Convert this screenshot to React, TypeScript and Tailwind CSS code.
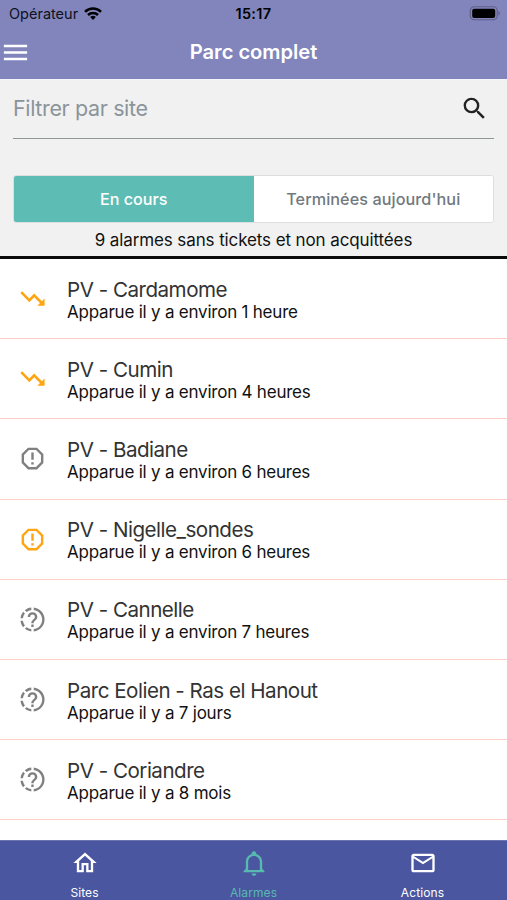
import React from "react";

const ICONS = {
  menu: "M3 6h18v2H3V6m0 5h18v2H3v-2m0 5h18v2H3v-2Z",
  search:
    "M9.5 3A6.5 6.5 0 0 1 16 9.5c0 1.61-.59 3.09-1.56 4.23l.27.27h.79l5 5-1.5 1.5-5-5v-.79l-.27-.27A6.52 6.52 0 0 1 9.5 16a6.5 6.5 0 0 1 0-13m0 2C7 5 5 7 5 9.5S7 14 9.5 14 14 12 14 9.5 12 5 9.5 5Z",
  trend:
    "M16 18l2.2-2.2-4.8-4.8-4 4L1.9 7.5 3.5 5.9l5.9 6 4-4 6.4 6.3L22 12v6h-6Z",
  alert:
    "M8.27 3 3 8.27v7.46L8.27 21h7.46L21 15.73V8.27L15.73 3M9.1 5h5.8L19 9.1v5.8L14.9 19H9.1L5 14.9V9.1M11 15h2v2h-2v-2m0-8h2v6h-2V7",
  home: "M12 5.69l5 4.5V18h-2v-6H9v6H7v-7.81l5-4.5M12 3 2 12h3v8h6v-6h2v6h6v-8h3L12 3Z",
  bell: "M10 21h4c0 1.1-.9 2-2 2s-2-.9-2-2m11-2v1H3v-1l2-2v-6c0-3.1 2.03-5.83 5-6.71V4c0-1.1.9-2 2-2s2 .9 2 2v.29c2.97.88 5 3.61 5 6.71v6l2 2m-4-8c0-2.76-2.24-5-5-5s-5 2.24-5 5v7h10v-7Z",
  mail: "M22 6c0-1.1-.9-2-2-2H4c-1.1 0-2 .9-2 2v12c0 1.1.9 2 2 2h16c1.1 0 2-.9 2-2V6m-2 0-8 5-8-5h16m0 12H4V8l8 5 8-5v10Z",
};

function Icon({ d, className }: { d: string; className: string }) {
  return (
    <svg viewBox="0 0 24 24" fill="currentColor" className={className}>
      <path d={d} />
    </svg>
  );
}

function ProgressQuestion({ className }: { className: string }) {
  return (
    <svg viewBox="0 0 24 24" fill="currentColor" className={className}>
      <path d="M13 2.03v2.02c4.39.54 7.5 4.53 6.96 8.92-.46 3.64-3.32 6.53-6.96 6.96v2c5.5-.55 9.5-5.43 8.95-10.93C21.5 6.25 17.73 2.5 13 2.03M11 2.06C9.05 2.25 7.19 3 5.67 4.26L7.1 5.74A7.9 7.9 0 0 1 11 4.06v-2M4.26 5.67A9.9 9.9 0 0 0 2.05 11h2c.19-1.42.75-2.77 1.64-3.9L4.26 5.67M2.06 13c.2 1.96.97 3.81 2.21 5.33l1.42-1.43A8 8 0 0 1 4.06 13h-2m5.04 5.37-1.43 1.37A10 10 0 0 0 11 22v-2a8 8 0 0 1-3.9-1.63Z" />
      <path d="M15.07 12.05l-.9.92C13.45 13.6 13 14 13 15.2h-2v-.3c0-1.11.45-1.81 1.17-2.53l1.24-1.16c.37-.36.59-.86.59-1.31a2 2 0 0 0-4 0H8a4 4 0 0 1 8 0c0 .88-.36 1.5-.93 2.15M13 18.2h-2v-2h2v2Z" />
    </svg>
  );
}

type Kind = "trend" | "alertGray" | "alertOrange" | "question";

const ALARMS: { kind: Kind; name: string; since: string }[] = [
  { kind: "trend", name: "PV - Cardamome", since: "Apparue il y a environ 1 heure" },
  { kind: "trend", name: "PV - Cumin", since: "Apparue il y a environ 4 heures" },
  { kind: "alertGray", name: "PV - Badiane", since: "Apparue il y a environ 6 heures" },
  { kind: "alertOrange", name: "PV - Nigelle_sondes", since: "Apparue il y a environ 6 heures" },
  { kind: "question", name: "PV - Cannelle", since: "Apparue il y a environ 7 heures" },
  { kind: "question", name: "Parc Eolien - Ras el Hanout", since: "Apparue il y a 7 jours" },
  { kind: "question", name: "PV - Coriandre", since: "Apparue il y a 8 mois" },
];

function AlarmIcon({ kind }: { kind: Kind }) {
  if (kind === "trend") return <Icon d={ICONS.trend} className="size-[29px] text-[#fea514]" />;
  if (kind === "alertGray") return <Icon d={ICONS.alert} className="size-[29px] text-[#808080]" />;
  if (kind === "alertOrange") return <Icon d={ICONS.alert} className="size-[29px] text-[#fea514]" />;
  return <ProgressQuestion className="size-[29px] text-[#808080]" />;
}

export default function App() {
  return (
    <div className="flex h-[900px] w-[507px] flex-col overflow-hidden bg-white font-['Inter','Liberation_Sans',sans-serif] whitespace-nowrap">
      <header className="h-[79px] shrink-0 bg-[#8185bc]">
        <div className="grid h-7 grid-cols-3 items-center pr-[7px] pl-[9px] text-[#10111c]">
          <div className="flex items-center gap-[6px]">
            <span className="text-[14.5px]">Opérateur</span>
            <svg viewBox="0 0 18 13" className="-mt-0.5 h-[13px] w-[18px] text-black" fill="none" stroke="currentColor" strokeWidth="2.5">
              <path d="M1 4.8a11.4 11.4 0 0 1 16 0" />
              <path d="M4 8a7.2 7.2 0 0 1 10 0" />
              <path d="M9 13 6.2 10.1a4 4 0 0 1 5.6 0Z" fill="currentColor" stroke="none" />
            </svg>
          </div>
          <span className="-ml-[2px] text-center text-[14.5px] font-semibold tracking-[0.35px] text-black">15:17</span>
          <svg viewBox="0 0 31 15" className="-mt-0.5 h-[15px] w-[31px] justify-self-end">
            <rect x="1.25" y=".75" width="27" height="13" rx="4" fill="none" stroke="#625f86" strokeWidth="1.2" />
            <rect x="3.2" y="2.7" width="23" height="9.3" rx="2" fill="#000" />
            <path d="M29.5 5v4.5c1.8-.7 1.8-3.8 0-4.5Z" fill="#625f86" />
          </svg>
        </div>
        <div className="grid h-[49px] grid-cols-[40px_1fr_40px] items-center">
          <Icon d={ICONS.menu} className="size-[31px] text-white" />
          <h1 className="text-center text-[20.2px] font-semibold tracking-[-0.05px] text-white">Parc complet</h1>
        </div>
      </header>

      <section className="flex h-[180px] shrink-0 flex-col border-b-[3px] border-[#0a0a0a] border-t border-t-[#f4f6fc] bg-[#f1f1f1] px-[13px]">
        <div className="flex h-[59px] shrink-0 items-center justify-between border-b border-[#8f9799] pr-[5px] pb-0.5">
          <span className="text-[21.5px] tracking-[-0.36px] text-[#8b949b]">Filtrer par site</span>
          <Icon d={ICONS.search} className="size-[29px] text-[#222222]" />
        </div>
        <div className="mt-9 grid h-12 shrink-0 grid-cols-2 overflow-hidden rounded-[3px] border border-[#dcdfe1] text-[16.2px] font-medium">
          <div className="flex items-center justify-center bg-[#5dbcb3] text-white">En cours</div>
          <div className="flex items-center justify-center bg-white tracking-[0.07px] text-[#717980]">Terminées aujourd'hui</div>
        </div>
        <p className="mt-[5px] text-center text-[17px] leading-6 tracking-[-0.11px] text-[#111111]">9 alarmes sans tickets et non acquittées</p>
      </section>

      <main className="min-h-0 flex-1 overflow-hidden">
        {ALARMS.map((a) => (
          <div key={a.name} className="flex h-[80.2px] items-center border-b border-[#fbcdc4] pl-[18px]">
            <AlarmIcon kind={a.kind} />
            <div className="mt-[3px] ml-5">
              <div className="text-[20.6px] leading-6 tracking-[-0.5px] text-[#333333]">{a.name}</div>
              <div className="text-[17px] leading-[21px] tracking-[-0.22px] text-[#111111]">{a.since}</div>
            </div>
          </div>
        ))}
      </main>

      <nav className="grid h-[60px] shrink-0 grid-cols-3 border-t border-[#6c74b0] bg-[#4a57a0] text-[12px] text-white">
        <div className="flex flex-col items-center pt-2">
          <Icon d={ICONS.home} className="size-7" />
          <span className="mt-2 leading-4 tracking-[0.1px]">Sites</span>
        </div>
        <div className="flex flex-col items-center pt-2 text-[#58b9b0]">
          <Icon d={ICONS.bell} className="size-7" />
          <span className="mt-2 leading-4 tracking-[0.1px]">Alarmes</span>
        </div>
        <div className="flex flex-col items-center pt-2">
          <Icon d={ICONS.mail} className="size-7" />
          <span className="mt-2 leading-4 tracking-[0.1px]">Actions</span>
        </div>
      </nav>
    </div>
  );
}
